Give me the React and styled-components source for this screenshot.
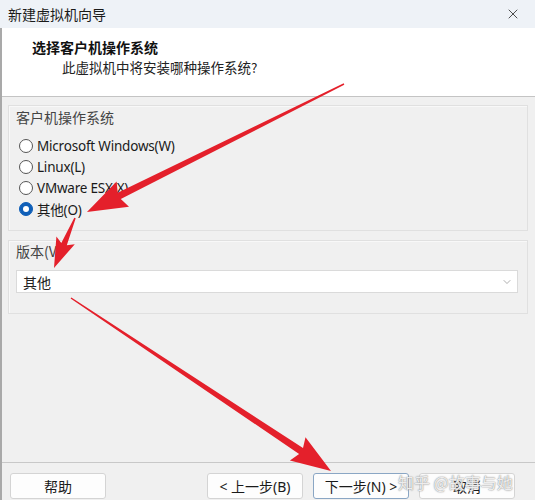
import styled, { createGlobalStyle } from "styled-components";
import { X, ChevronDown } from "lucide-react";

const GlobalStyle = createGlobalStyle`
  * { box-sizing: border-box; }
  body {
    margin: 0;
    background: #f0f0f0;
    font-family: "Segoe UI", "Noto Sans", "Noto Sans CJK SC", sans-serif;
  }
`;

const Window = styled.div`
  position: relative;
  width: 535px;
  height: 500px;
  display: flex;
  flex-direction: column;
  overflow: hidden;
  background: #f0f0f0;
`;

const TitleBar = styled.div`
  height: 28px;
  flex: none;
  display: flex;
  align-items: center;
  justify-content: space-between;
  padding: 0 14px 0 8px;
  background: #eef2f7;
  font-family: "Noto Sans CJK SC", sans-serif;
  font-size: 14px;
  color: #1a1a1a;
`;

const Frame = styled.div`
  flex: 1;
  display: flex;
  flex-direction: column;
  border-left: 2px solid #a9a9a9;
`;

const Header = styled.div`
  height: 69px;
  flex: none;
  background: #fff;
  border-bottom: 1px solid #c4c4c4;
  padding: 9px 0 0 30px;
  font-family: "Noto Sans CJK SC", sans-serif;
`;

const Heading = styled.div`
  font-size: 14px;
  font-weight: 700;
  line-height: 20px;
  color: #111;
`;

const SubHeading = styled.div`
  font-size: 13.5px;
  line-height: 20px;
  padding-left: 30px;
  color: #222;
`;

const Body = styled.div`
  flex: 1;
  display: flex;
  flex-direction: column;
  gap: 9px;
  padding: 8px 7px 0 6px;
`;

const Group = styled.div`
  border: 1px solid #e0e0e0;
  box-shadow: inset 1px 1px 0 #f8f8f8;
  padding: ${(p) => p.$pad};
`;

const GroupLabel = styled.div`
  font-family: "Noto Sans CJK SC", sans-serif;
  font-size: 14px;
  line-height: 20px;
  color: #444;
`;

const RadioList = styled.div`
  display: flex;
  flex-direction: column;
  margin-top: 8px;
`;

const RadioRow = styled.label`
  height: 21px;
  display: flex;
  align-items: center;
  gap: 4px;
  font-size: 13.5px;
  letter-spacing: -0.2px;
  color: #1a1a1a;
  margin-left: 3px;
`;

const RadioDot = styled.span`
  width: 14px;
  height: 14px;
  border-radius: 50%;
  flex: none;
  background: ${(p) => (p.$on ? "#0f5fb8" : "#fff")};
  border: 1px solid ${(p) => (p.$on ? "#0f5fb8" : "#555")};
  display: flex;
  align-items: center;
  justify-content: center;

  &::after {
    content: "";
    display: ${(p) => (p.$on ? "block" : "none")};
    width: 6px;
    height: 6px;
    border-radius: 50%;
    background: #fff;
  }
`;

const Select = styled.div`
  margin-top: 9px;
  height: 23px;
  display: flex;
  align-items: center;
  justify-content: space-between;
  background: #fff;
  border: 1px solid #dadada;
  padding: 0 4px 0 6px;
  font-family: "Noto Sans CJK SC", sans-serif;
  font-size: 14px;
  color: #222;
`;

const Footer = styled.div`
  height: 38px;
  flex: none;
  border-top: 1px solid #c8c8c8;
  display: flex;
  align-items: flex-start;
  justify-content: space-between;
  padding: 10px 20px 0 8px;
`;

const ButtonGroup = styled.div`
  display: flex;
  gap: 10px;
`;

const Button = styled.button`
  all: unset;
  width: 94px;
  height: 24px;
  display: flex;
  align-items: center;
  justify-content: center;
  background: #fdfdfd;
  border: 1px solid ${(p) => (p.$primary ? "#8aa6c4" : "#d4d4d4")};
  border-radius: 3px;
  font-family: "Segoe UI", "Noto Sans", "Noto Sans CJK SC", sans-serif;
  font-size: 14px;
  color: #1a1a1a;
`;

const Watermark = styled.div`
  position: absolute;
  left: 398px;
  top: 470px;
  font-family: "Noto Sans CJK SC", sans-serif;
  font-size: 16px;
  color: rgba(255, 255, 255, 0.85);
  text-shadow: 0 0 1px #888, 0 0 2px #aaa;
  pointer-events: none;
`;

const Overlay = styled.svg`
  position: absolute;
  left: 0;
  top: 0;
  pointer-events: none;
`;

const arrow = ([tx, ty], [px, py], w0, w1, hl, hw) => {
  const len = Math.hypot(px - tx, py - ty);
  const ux = (px - tx) / len;
  const uy = (py - ty) / len;
  const nx = -uy;
  const ny = ux;
  const bx = px - ux * hl;
  const by = py - uy * hl;
  const pts = [
    [tx + (nx * w0) / 2, ty + (ny * w0) / 2],
    [bx + (nx * w1) / 2, by + (ny * w1) / 2],
    [bx - ux * 4 + (nx * hw) / 2, by - uy * 4 + (ny * hw) / 2],
    [px, py],
    [bx - ux * 4 - (nx * hw) / 2, by - uy * 4 - (ny * hw) / 2],
    [bx - (nx * w1) / 2, by - (ny * w1) / 2],
    [tx - (nx * w0) / 2, ty - (ny * w0) / 2],
  ];
  return pts.map((p) => p.map((v) => v.toFixed(1)).join(",")).join(" ");
};

const options = [
  "Microsoft Windows(W)",
  "Linux(L)",
  "VMware ESX(X)",
  "其他(O)",
];

const App = () => {
  return (
    <>
      <GlobalStyle />
      <Window>
        <TitleBar>
          新建虚拟机向导
          <X size={16} strokeWidth={1.2} color="#222" />
        </TitleBar>
        <Frame>
          <Header>
            <Heading>选择客户机操作系统</Heading>
            <SubHeading>此虚拟机中将安装哪种操作系统?</SubHeading>
          </Header>
          <Body>
            <Group $pad="1px 7px 11px 7px">
              <GroupLabel>客户机操作系统</GroupLabel>
              <RadioList>
                {options.map((o, i) => (
                  <RadioRow key={o}>
                    <RadioDot $on={i === 3} />
                    {o}
                  </RadioRow>
                ))}
              </RadioList>
            </Group>
            <Group $pad="0 9px 20px 7px">
              <GroupLabel>版本(V)</GroupLabel>
              <Select>
                其他
                <ChevronDown size={12} strokeWidth={1.2} color="#777" />
              </Select>
            </Group>
          </Body>
          <Footer>
            <Button>帮助</Button>
            <ButtonGroup>
              <Button>&lt; 上一步(B)</Button>
              <Button $primary>下一步(N) &gt;</Button>
              <Button>取消</Button>
            </ButtonGroup>
          </Footer>
        </Frame>
        <Watermark>知乎 @故事与她</Watermark>
        <Overlay width="535" height="500" viewBox="0 0 535 500">
          <g fill="#e4202b">
            <polygon points={arrow([344, 84], [87, 212], 1.5, 7, 36, 28)} />
            <polygon points={arrow([75, 218], [54, 268], 1.5, 6, 26, 20)} />
            <polygon points={arrow([71, 298], [331, 471], 1.5, 7, 36, 28)} />
          </g>
        </Overlay>
      </Window>
    </>
  );
};

export default App;
